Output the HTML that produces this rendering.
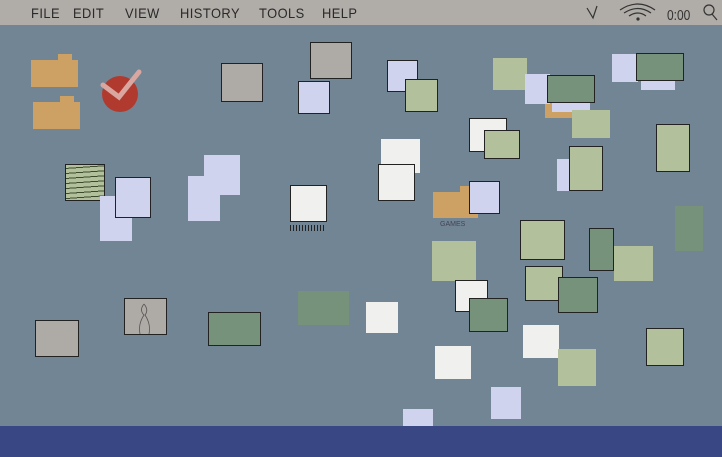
<!DOCTYPE html>
<html><head><meta charset="utf-8"><style>
body{margin:0;width:722px;height:457px;overflow:hidden;background:#718595;position:relative;font-family:"Liberation Sans",sans-serif}
.r{position:absolute}
.b{outline:1px solid #222;outline-offset:-1px}
.g{background:#aeaaa6}.l{background:#cfd3ee}.lg{background:#b2c09c}.dg{background:#76927a}.w{background:#f0f0ee}.o{background:#cda064}
#menu{position:absolute;left:0;top:0;width:722px;height:25px;background:#b0aca8}
#menu span{position:absolute;top:5px;font-size:14px;color:#2a2a2a;letter-spacing:0.5px;transform:scaleX(0.92);transform-origin:left}
#bot{position:absolute;left:0;top:426px;width:722px;height:31px;background:#3a4785}
</style></head><body>
<div id="menu">
<span style="left:31px">FILE</span><span style="left:73px">EDIT</span><span style="left:125px">VIEW</span><span style="left:180px">HISTORY</span><span style="left:259px">TOOLS</span><span style="left:322px">HELP</span>
<svg class="r" style="left:580px;top:0" width="142" height="25" fill="none" stroke="#333" stroke-width="1.2">
<path d="M7 8 L13 18 L17 6"/>
<path d="M40 10 Q58 -2 75 10 M44 13 Q58 4 71 13 M49 16 Q58 10 66 16"/><circle cx="58" cy="19" r="1" fill="#333"/>
<text x="87" y="20" font-size="15" fill="#333" stroke="none" font-family="Liberation Sans" transform="translate(87 0) scale(0.8 1) translate(-87 0)">0:00</text>
<circle cx="129" cy="10" r="5"/><path d="M132 14 L137 20"/>
</svg>
</div>
<div class="r o" style="left:31px;top:60px;width:47px;height:27px"></div><div class="r o" style="left:58px;top:54px;width:14px;height:7px"></div>
<div class="r o" style="left:33px;top:102px;width:47px;height:27px"></div><div class="r o" style="left:60px;top:96px;width:14px;height:7px"></div>
<div class="r" style="left:102px;top:76px;width:36px;height:36px;border-radius:50%;background:#b03a2e"></div>
<svg class="r" style="left:95px;top:65px" width="50" height="40"><path d="M8 20 L24 32 L44 7" fill="none" stroke="#d9a7a0" stroke-width="5" stroke-linecap="round"/></svg>

<div class="r g b" style="left:310px;top:42px;width:42px;height:37px"></div>
<div class="r g b" style="left:221px;top:63px;width:42px;height:39px"></div>
<div class="r l b" style="left:298px;top:81px;width:32px;height:33px"></div>
<div class="r l b" style="left:387px;top:60px;width:31px;height:32px"></div>
<div class="r lg b" style="left:405px;top:79px;width:33px;height:33px"></div>
<div class="r lg" style="left:493px;top:58px;width:34px;height:32px"></div>
<div class="r o" style="left:545px;top:100px;width:45px;height:18px"></div>
<div class="r l" style="left:525px;top:74px;width:25px;height:30px"></div>
<div class="r l" style="left:552px;top:98px;width:38px;height:14px"></div>
<div class="r dg b" style="left:547px;top:75px;width:48px;height:28px"></div>
<div class="r lg" style="left:572px;top:110px;width:38px;height:28px"></div>
<div class="r l" style="left:641px;top:78px;width:34px;height:12px"></div>
<div class="r l" style="left:612px;top:54px;width:26px;height:28px"></div>
<div class="r dg b" style="left:636px;top:53px;width:48px;height:28px"></div>
<div class="r lg b" style="left:656px;top:124px;width:34px;height:48px"></div>
<div class="r w b" style="left:469px;top:118px;width:38px;height:34px"></div>
<div class="r lg b" style="left:484px;top:130px;width:36px;height:29px"></div>
<div class="r w" style="left:381px;top:139px;width:39px;height:34px"></div>
<div class="r w b" style="left:378px;top:164px;width:37px;height:37px"></div>
<div class="r l" style="left:557px;top:159px;width:14px;height:32px"></div>
<div class="r lg b" style="left:569px;top:146px;width:34px;height:45px"></div>
<div class="r o" style="left:433px;top:192px;width:45px;height:26px"></div><div class="r o" style="left:460px;top:186px;width:10px;height:8px"></div>
<div class="r l b" style="left:469px;top:181px;width:31px;height:33px"></div>
<div class="r" style="left:440px;top:221px;font-size:7px;color:#445">GAMES</div>
<div class="r dg" style="left:675px;top:206px;width:28px;height:45px"></div>

<div class="r lg b" style="left:65px;top:164px;width:40px;height:37px;background-image:repeating-linear-gradient(176deg,transparent 0 4px,#3a4a2a 4px 5px)"></div>
<div class="r l" style="left:100px;top:196px;width:32px;height:45px"></div>
<div class="r l b" style="left:115px;top:177px;width:36px;height:41px"></div>
<div class="r l" style="left:188px;top:176px;width:32px;height:45px"></div>
<div class="r l" style="left:204px;top:155px;width:36px;height:40px"></div>
<div class="r w b" style="left:290px;top:185px;width:37px;height:37px"></div>
<div class="r" style="left:290px;top:225px;width:36px;height:6px;background:repeating-linear-gradient(90deg,#222 0 1px,transparent 1px 3px)"></div>

<div class="r lg b" style="left:520px;top:220px;width:45px;height:40px"></div>
<div class="r dg b" style="left:589px;top:228px;width:25px;height:43px"></div>
<div class="r lg" style="left:614px;top:246px;width:39px;height:35px"></div>
<div class="r lg" style="left:432px;top:241px;width:44px;height:40px"></div>
<div class="r w b" style="left:455px;top:280px;width:33px;height:32px"></div>
<div class="r lg b" style="left:525px;top:266px;width:38px;height:35px"></div>
<div class="r dg b" style="left:558px;top:277px;width:40px;height:36px"></div>
<div class="r dg b" style="left:469px;top:298px;width:39px;height:34px"></div>

<div class="r g b" style="left:35px;top:320px;width:44px;height:37px"></div>
<div class="r g b" style="left:124px;top:298px;width:43px;height:37px"></div>
<svg class="r" style="left:124px;top:298px" width="43" height="37"><path d="M20 6 Q15 12 20 17 Q14 26 16 36 M20 6 Q25 12 21 17 Q27 26 25 36" fill="none" stroke="#555" stroke-width="0.8"/></svg>
<div class="r dg b" style="left:208px;top:312px;width:53px;height:34px"></div>
<div class="r dg" style="left:298px;top:291px;width:51px;height:34px"></div>
<div class="r w" style="left:366px;top:302px;width:32px;height:31px"></div>
<div class="r w" style="left:435px;top:346px;width:36px;height:33px"></div>
<div class="r w" style="left:523px;top:325px;width:36px;height:33px"></div>
<div class="r lg" style="left:558px;top:349px;width:38px;height:37px"></div>
<div class="r lg b" style="left:646px;top:328px;width:38px;height:38px"></div>
<div class="r l" style="left:491px;top:387px;width:30px;height:32px"></div>
<div class="r l" style="left:403px;top:409px;width:30px;height:17px"></div>
<div id="bot"></div>
</body></html>
